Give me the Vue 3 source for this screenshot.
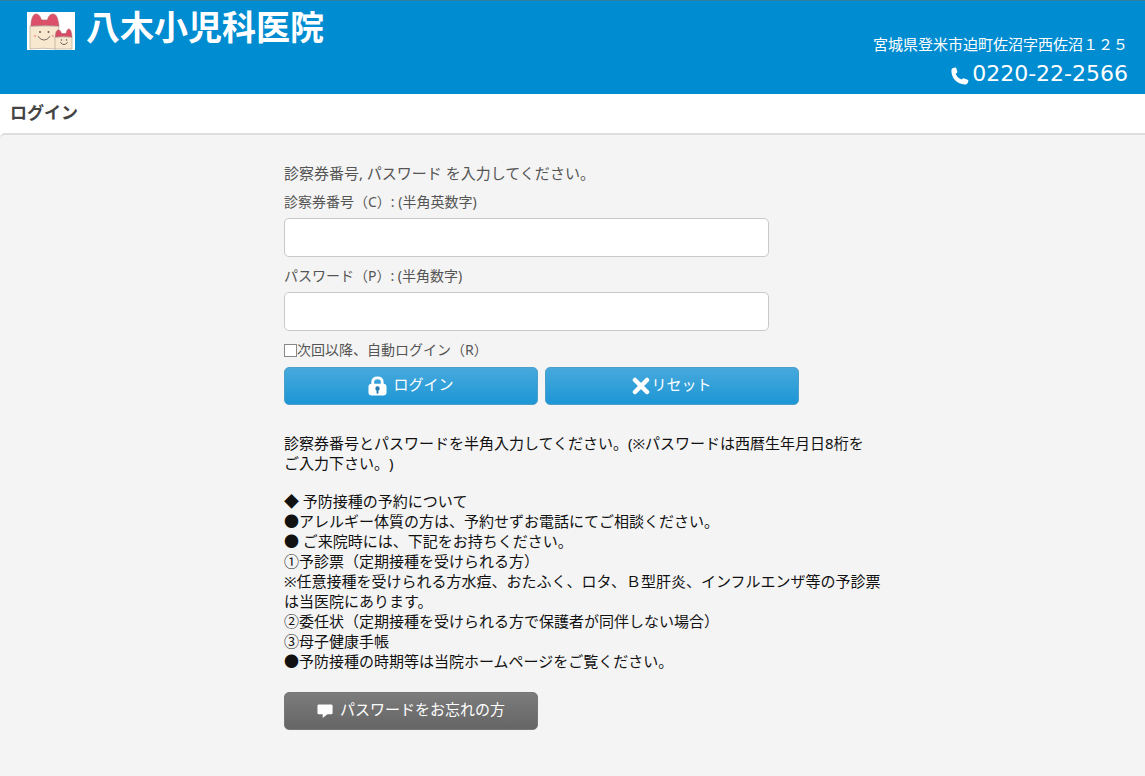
<script setup>
import { ref } from 'vue'

const card = ref('')
const password = ref('')
const remember = ref(false)

const notes = [
  '◆ 予防接種の予約について',
  '●アレルギー体質の方は、予約せずお電話にてご相談ください。',
  '● ご来院時には、下記をお持ちください。',
  '①予診票（定期接種を受けられる方）',
  '※任意接種を受けられる方水痘、おたふく、ロタ、Ｂ型肝炎、インフルエンザ等の予診票は当医院にあります。',
  '②委任状（定期接種を受けられる方で保護者が同伴しない場合）',
  '③母子健康手帳',
  '●予防接種の時期等は当院ホームページをご覧ください。',
]
</script>

<template>
  <div class="page">
    <header class="top">
      <div class="brand">
        <svg class="logo" viewBox="0 0 48 38" aria-hidden="true">
          <rect width="48" height="38" fill="#fff" />
          <path d="M3 14 L3 37 Q16 35.500 29 37 L32 14 Z" fill="#f8e8cf" stroke="#a99b8d" stroke-width=".6" />
          <path d="M4 14 C4 7 6 2 9 2 C12 2 13.500 5 14.500 8 L20.500 8 C21 5 23 2 26 2 C30 2 31 7 32 14 Q18 12.500 4 14 Z" fill="#dc5068" stroke="#a96570" stroke-width=".6" />
          <path d="M28 25 L28 37 L45 37 L45 25 Z" fill="#f8e8cf" stroke="#a99b8d" stroke-width=".6" />
          <path d="M28.500 25 C28.500 20 29.500 18 31.500 18 C33.500 18 34 20 34.500 21.500 L39 21.500 C39.500 19 40.500 17 42 17 C44 17 44.500 21 45 25 Q36 23.500 28.500 25 Z" fill="#d94a64" stroke="#a96570" stroke-width=".6" />
          <g fill="none" stroke="#74655e" stroke-linecap="round">
            <path d="M11 24.500 Q17 32 23 24.500" />
            <path d="M33.500 30.500 Q37 35 40.500 30.500" />
          </g>
          <g fill="#665a55">
            <circle cx="13" cy="20" r="1" /><circle cx="21.500" cy="20" r="1" />
            <circle cx="34.500" cy="28" r=".8" /><circle cx="39.500" cy="28" r=".8" />
          </g>
          <g fill="#efb5a4">
            <circle cx="8" cy="24" r="1.300" /><circle cx="26" cy="24" r="1.300" />
          </g>
        </svg>
        <h1>八木小児科医院</h1>
      </div>
      <address class="contact">
        <span>宮城県登米市迫町佐沼字西佐沼１２５</span>
        <span class="phone">
          <svg class="handset" viewBox="0 0 18 18" aria-hidden="true">
            <path d="M1.500 1.300 L3.800 .5 Q4.900 .2 5.300 1.200 L6.300 4.400 Q6.500 5.300 5.700 5.900 L4.700 6.800 C5.500 9.300 7.600 11.600 10.700 12.600 L11.800 11.600 Q12.400 11.100 13.200 11.400 L16.700 12.800 Q17.700 13.300 17.400 14.300 L16.600 16 Q16.200 17.200 14.700 17.400 C7 18 0 11.500 .4 3.300 Q.5 1.800 1.500 1.300 Z" fill="#fff" />
          </svg>0220-22-2566
        </span>
      </address>
    </header>
    <h2>ログイン</h2>
    <main>
      <div class="content">
        <form @submit.prevent>
          <p class="intro">診察券番号, パスワード を入力してください。</p>
          <label for="card">診察券番号（C）: (半角英数字)</label>
          <input id="card" v-model="card" class="field" type="text" accesskey="c" />
          <label for="pass">パスワード（P）: (半角数字)</label>
          <input id="pass" v-model="password" class="field" type="password" accesskey="p" />
          <div class="remember">
            <input id="auto" v-model="remember" type="checkbox" accesskey="r" />
            <label for="auto">次回以降、自動ログイン（R）</label>
          </div>
          <div class="actions">
            <button class="blue" type="submit">
              <svg class="lock" viewBox="0 0 20 20" aria-hidden="true">
                <path d="M5 9 V6 Q5 1.500 10 1.500 Q15 1.500 15 6 V9" fill="none" stroke="#fff" stroke-width="3" />
                <rect x=".5" y="7.500" width="19" height="12.500" rx="3.500" fill="#fff" />
                <circle cx="10" cy="12.500" r="2.300" fill="#2379b0" />
                <path d="M9 13 H11 V18 H9 Z" fill="#2379b0" />
              </svg>ログイン
            </button>
            <button class="blue reset" type="reset">
              <svg class="cross" viewBox="0 0 18 18" aria-hidden="true">
                <path d="M3 3 L15 15 M15 3 L3 15" stroke="#fff" stroke-width="4.500" stroke-linecap="round" />
              </svg>リセット
            </button>
          </div>
        </form>
        <p class="notice">診察券番号とパスワードを半角入力してください。(※パスワードは西暦生年月日8桁を<br />ご入力下さい。)</p>
        <div class="notes">
          <p v-for="note in notes" :key="note">{{ note }}</p>
        </div>
        <button class="gray" type="button">
          <svg class="bubble" viewBox="0 0 18 16" aria-hidden="true">
            <path d="M2 1 H15 Q16.500 1 16.500 2.500 V10 Q16.500 11.500 15 11.500 H11 L6 15.500 V11.500 H2 Q.5 11.500 .5 10 V2.500 Q.5 1 2 1 Z" fill="#fff" />
          </svg>パスワードをお忘れの方
        </button>
      </div>
    </main>
  </div>
</template>

<style>
body {
  background: #f4f4f4;
}
</style>

<style scoped>
.page {
  font-family: "Noto Sans", "Noto Sans CJK JP", sans-serif;
  font-size: 15px;
  line-height: 20px;
  color: #111;
  background: #fff;
  text-spacing-trim: space-all;
}
h1, h2, p {
  margin: 0;
}
.top {
  display: flex;
  justify-content: space-between;
  box-sizing: border-box;
  min-height: 94px;
  padding: 0 17px 0 27px;
  border-top: 1px solid #347f9f;
  background: #008cd1;
  color: #fff;
}
.brand {
  display: flex;
  align-items: flex-start;
  gap: 11px;
}
.logo {
  width: 48px;
  height: 38px;
  margin-top: 11px;
}
h1 {
  padding-top: 6px;
  font-size: 34px;
  line-height: 40px;
}
.contact {
  display: flex;
  flex-direction: column;
  align-items: flex-end;
  padding-top: 33px;
  font-style: normal;
}
.phone {
  display: flex;
  align-items: center;
  gap: 3px;
  padding-top: 6px;
  font-family: "DejaVu Sans", sans-serif;
  font-size: 22px;
  line-height: 28px;
}
.handset {
  width: 18px;
  height: 18px;
  margin-top: 4px;
}
h2 {
  padding: 6px 10px 8px;
  font-size: 17px;
  line-height: 25px;
  color: #444;
}
main {
  border-top: 2px solid #dedede;
  border-top-left-radius: 5px;
  background: #f4f4f4;
  padding: 28px 0 46px;
}
.content {
  max-width: 604px;
  margin-left: 24.8%;
}
form {
  color: #555;
}
.intro {
  padding-bottom: 9px;
}
label {
  display: block;
  font-size: 14px;
}
.field {
  display: block;
  box-sizing: border-box;
  width: 100%;
  max-width: 485px;
  height: 39px;
  margin: 6px 0 9px;
  padding: 0 8px;
  border: 1px solid #c9c9c9;
  border-radius: 5px;
  background: #fff;
  font: inherit;
}
.remember {
  display: flex;
  align-items: center;
}
.remember input {
  appearance: none;
  width: 13px;
  height: 13px;
  margin: 0;
  border: 1px solid #888;
  background: #fff;
}
.remember input:checked {
  background: #2a93cf;
}
.actions {
  display: flex;
  gap: 7px;
  margin-top: 7px;
}
button {
  display: flex;
  align-items: center;
  justify-content: center;
  box-sizing: border-box;
  gap: 6px;
  width: 254px;
  height: 38px;
  padding: 0 0 4px;
  border-radius: 5px;
  font: inherit;
  color: #fff;
}
.blue {
  border: 1px solid #4c9fcb;
  background: linear-gradient(#47a9dc, #1d96d5);
}
.reset {
  gap: 1px;
}
.gray {
  margin-top: 21px;
  border: 1px solid #777;
  background: linear-gradient(#7c7c7c, #656565);
}
.lock {
  width: 19px;
  height: 20px;
  margin-top: 4px;
}
.cross {
  width: 18px;
  height: 18px;
  margin-top: 4px;
}
.bubble {
  width: 17px;
  height: 16px;
  margin-top: 4px;
}
.notice {
  padding: 28px 0 18px;
}
</style>
